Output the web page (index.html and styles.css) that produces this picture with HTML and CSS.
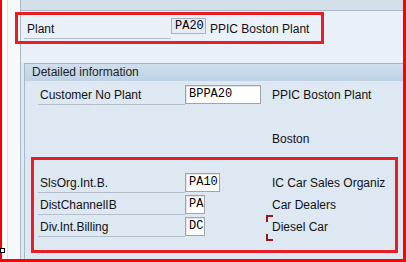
FILE: index.html
```html
<!DOCTYPE html>
<html lang="en">
<head>
  <meta charset="UTF-8" />
  <title>Plant - Detailed information</title>
  <link rel="stylesheet" href="styles.css">
</head>
<body>
  <div class="frame">
    <div class="gutter"></div>
    <div class="rail"></div>

    <div class="screen">
      <div class="topbar"></div>

      <div class="plant-area">
        <div class="row plant-row">
          <span class="lbl lbl-plant">Plant</span>
          <span class="fld ro">PA20</span>
          <span class="txt txt-plant">PPIC Boston Plant</span>
        </div>
      </div>

      <div class="group">
        <div class="group-title">Detailed information</div>
        <div class="group-body">
          <div class="row">
            <span class="lbl">Customer No Plant</span>
            <span class="cell"><span class="fld w-long">BPPA20</span></span>
            <span class="txt">PPIC Boston Plant</span>
          </div>
          <div class="row"></div>
          <div class="row">
            <span class="lbl blank"></span>
            <span class="cell"></span>
            <span class="txt">Boston</span>
          </div>
          <div class="row"></div>
          <div class="row">
            <span class="lbl">SlsOrg.Int.B.</span>
            <span class="cell"><span class="fld w-four">PA10</span></span>
            <span class="txt">IC Car Sales Organiz</span>
          </div>
          <div class="row">
            <span class="lbl">DistChannelIB</span>
            <span class="cell"><span class="fld w-two">PA</span></span>
            <span class="txt">Car Dealers</span>
          </div>
          <div class="row">
            <span class="lbl">Div.Int.Billing</span>
            <span class="cell"><span class="fld w-two">DC</span></span>
            <span class="txt focus">Diesel Car</span>
          </div>
        </div>
      </div>
    </div>
  </div>

  <!-- annotation overlays -->
  <div class="mark mark-plant"></div>
  <div class="mark mark-sales"></div>
  <div class="tick"></div>
</body>
</html>
```

FILE: styles.css
```css
* { box-sizing: border-box; }

body {
  margin: 0;
  width: 406px;
  height: 262px;
  position: relative;
  background: #fff;
  font-family: "Liberation Sans", Arial, sans-serif;
  font-size: 12px;
  color: #111;
  overflow: hidden;
}

.frame {
  display: flex;
  height: 262px;
  border-left: 2px solid #ff0000;
  border-right: 3px solid #ff0000;
  border-bottom: 3px solid #ff0000;
  overflow: hidden;
}

.gutter {
  width: 5px;
  background: #fff;
}

.rail {
  width: 14px;
  background: #f6f8fa;
  border-left: 1px solid #dce2e8;
  border-right: 1px solid #aab8c5;
}

.screen {
  flex: 1;
  display: flex;
  flex-direction: column;
  background: #dfe9f2;
}

.topbar {
  height: 11px;
  background: #d3dfe9;
  border-bottom: 1px solid #a9b9c9;
}

.plant-area {
  height: 52px;
  padding: 6px 0 0 3px;
  background: #e9f0f7;
}

.row {
  display: flex;
  align-items: flex-start;
  height: 22px;
}

.lbl {
  width: 147px;
  height: 22px;
  padding: 3px 0 0 2px;
  line-height: 19px;
  border-bottom: 1px solid #b4bfca;
  white-space: nowrap;
}

.lbl.blank { border-bottom: none; }

.lbl-plant { padding-left: 3px; }

.fld {
  display: block;
  margin-top: 2px;
  height: 19px;
  line-height: 17px;
  padding-left: 3px;
  font-family: "Liberation Mono", "Courier New", monospace;
  font-size: 12px;
  color: #000;
  background: #fff;
  border: 1px solid #a3a3a3;
  box-shadow: inset 1px 1px 0 #e4e4e4;
}

.fld.ro {
  width: 35px;
  height: 16px;
  line-height: 14px;
  margin-top: 1px;
  background: #e6ebf0;
  border-color: #a9b2bb;
  box-shadow: none;
}

.cell {
  width: 87px;
  height: 22px;
  display: flex;
}

.w-long { width: 76px; }
.w-four { width: 35px; }
.w-two { width: 20px; }

.txt {
  padding-top: 3px;
  line-height: 19px;
  white-space: nowrap;
}

.txt-plant { margin-left: 4px; }

.focus { position: relative; }

.focus::before,
.focus::after {
  content: "";
  position: absolute;
  left: -6px;
  width: 5px;
  height: 5px;
  border-left: 2px solid #9e1616;
}

.focus::before {
  top: 0;
  border-top: 2px solid #9e1616;
}

.focus::after {
  bottom: -4px;
  border-bottom: 2px solid #9e1616;
}

.group {
  flex: 1;
  margin-left: 3px;
  border-top: 1px solid #9fb3c6;
  border-left: 1px solid #a6b9ca;
  background: #dde8f2;
}

.group-title {
  height: 17px;
  line-height: 17px;
  padding-left: 7px;
  color: #222;
  background: linear-gradient(#d0dfec, #bdd2e5);
}

.group-body {
  padding: 2px 0 0 13px;
}

.mark {
  position: absolute;
  border: 3px solid #e81e25;
}

.mark-plant {
  left: 15px;
  top: 12px;
  width: 309px;
  height: 32px;
}

.mark-sales {
  left: 31px;
  top: 157px;
  width: 367px;
  height: 96px;
}

.tick {
  position: absolute;
  left: 0;
  top: 248px;
  width: 5px;
  height: 5px;
  border: 1px solid #000;
  background: #fff;
}
```
